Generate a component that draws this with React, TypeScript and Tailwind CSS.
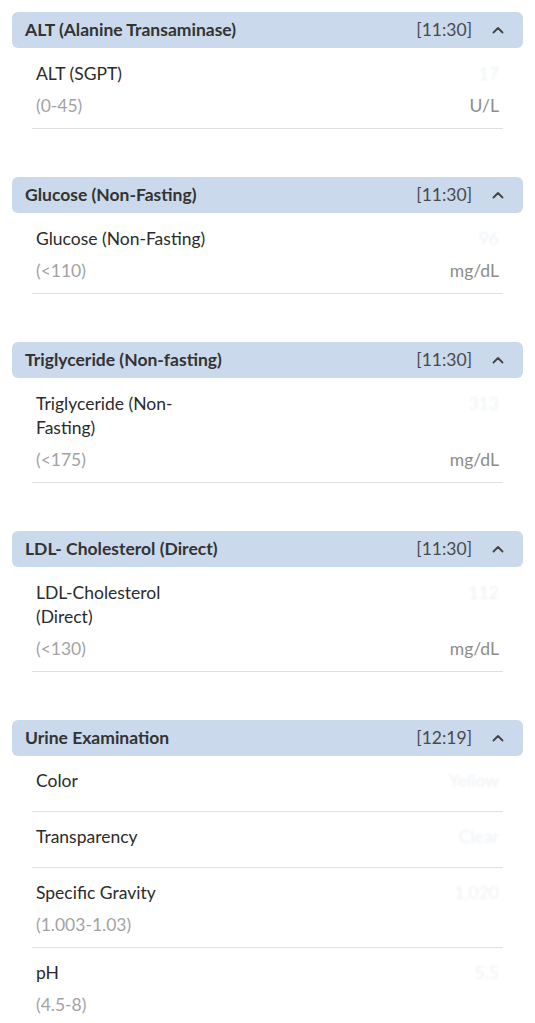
import React from "react";

type Row = { label: string; range?: string; unit?: string; value: string };
type Section = { title: string; time: string; compact?: boolean; rows: Row[] };

const sections: Section[] = [
  {
    title: "ALT (Alanine Transaminase)",
    time: "[11:30]",
    rows: [{ label: "ALT (SGPT)", range: "(0-45)", unit: "U/L", value: "17" }],
  },
  {
    title: "Glucose (Non-Fasting)",
    time: "[11:30]",
    rows: [{ label: "Glucose (Non-Fasting)", range: "(<110)", unit: "mg/dL", value: "96" }],
  },
  {
    title: "Triglyceride (Non-fasting)",
    time: "[11:30]",
    rows: [{ label: "Triglyceride (Non-Fasting)", range: "(<175)", unit: "mg/dL", value: "313" }],
  },
  {
    title: "LDL- Cholesterol (Direct)",
    time: "[11:30]",
    rows: [{ label: "LDL-Cholesterol (Direct)", range: "(<130)", unit: "mg/dL", value: "112" }],
  },
  {
    title: "Urine Examination",
    time: "[12:19]",
    compact: true,
    rows: [
      { label: "Color", value: "Yellow" },
      { label: "Transparency", value: "Clear" },
      { label: "Specific Gravity", range: "(1.003-1.03)", value: "1.020" },
      { label: "pH", range: "(4.5-8)", value: "5.5" },
    ],
  },
];

const Chevron = () => (
  <svg width="12" height="8" viewBox="0 0 12 8" fill="none" className="shrink-0">
    <polyline points="1.5,6.5 6,2 10.5,6.5" stroke="#444" strokeWidth="1.8" strokeLinecap="round" strokeLinejoin="round" />
  </svg>
);

export default function App() {
  return (
    <div className="min-h-screen bg-white pt-3 px-3 font-['Lato','Noto_Sans',sans-serif]">
      {sections.map((s, i) => (
        <section key={i} className="mb-12">
          {/* Header */}
          <div className="h-9 flex items-center justify-between rounded-md bg-[#cad9eb] pl-[13px] pr-[19px]">
            <span className="text-[17.5px] font-bold text-[#333]">{s.title}</span>
            <div className="flex items-center gap-5">
              <span className="text-[17.5px] text-[#4a4a4a]">{s.time}</span>
              <Chevron />
            </div>
          </div>

          {/* Rows */}
          <div className="mx-5">
            {s.rows.map((r, j) => (
              <div
                key={j}
                className={
                  s.compact
                    ? "border-b border-[#e0e0e0] px-1 pt-[13px] pb-[10px]"
                    : "border-b border-[#e0e0e0] px-1 pt-[14px] pb-[10px]"
                }
              >
                <div className="flex justify-between items-start">
                  <span className="max-w-[178px] text-[17.5px] leading-6 text-[#2b2b2b]">{r.label}</span>
                  <span className="text-[17.5px] leading-6 text-[#eef1f5] blur-[1px]">{r.value}</span>
                </div>
                <div className="mt-[8px] flex justify-between">
                  {r.range && <span className="text-[17.5px] leading-6 text-[#a3a3a3]">{r.range}</span>}
                  {r.unit && <span className="text-[17.5px] leading-6 text-[#8c8c8c]">{r.unit}</span>}
                </div>
              </div>
            ))}
          </div>
        </section>
      ))}
    </div>
  );
}
